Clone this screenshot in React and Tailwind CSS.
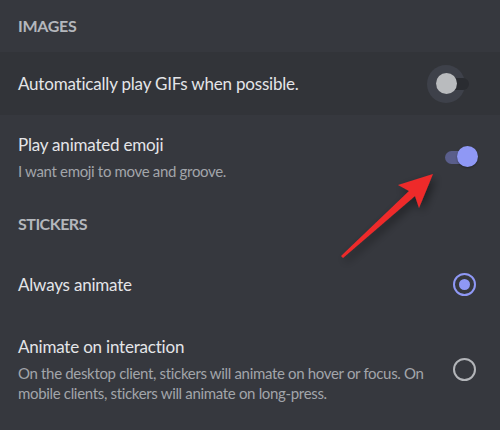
import React from "react";

function ToggleOff() {
  return (
    <div className="relative w-[42px] h-[42px] shrink-0">
      <div className="absolute left-0 top-[2px] w-[38px] h-[38px] rounded-full bg-[#3e414a]" />
      <div className="absolute left-[9px] top-[15px] w-[33px] h-[12px] rounded-full bg-[#2a2c31]" />
      <div className="absolute left-[8.5px] top-[10.5px] w-[21px] h-[21px] rounded-full bg-[#b9bbbe]" />
    </div>
  );
}

function ToggleOn() {
  return (
    <div className="relative w-[33px] h-[22px] shrink-0">
      <div className="absolute left-0 top-[4.5px] w-[26px] h-[13px] rounded-full bg-[#5a5e8b]" />
      <div className="absolute left-[12px] top-0 w-[21px] h-[21px] rounded-full bg-[#8f98f5] shadow-[0_1px_2px_rgba(0,0,0,0.35)]" />
    </div>
  );
}

function Radio({ checked }) {
  return checked ? (
    <div className="w-[23px] h-[23px] rounded-full border-[2.5px] border-[#8f98f5] flex items-center justify-center shrink-0">
      <div className="w-[11px] h-[11px] rounded-full bg-[#8f98f5]" />
    </div>
  ) : (
    <div className="w-[23px] h-[23px] rounded-full border-[2.5px] border-[#b3b5b9] shrink-0" />
  );
}

export default function App() {
  return (
    <div
      className="relative w-[500px] h-[430px] overflow-hidden bg-[#36383e] text-[#e4e5e8]"
      style={{ fontFamily: '"Lato", "Noto Sans", sans-serif' }}
    >
      <div className="h-[52px] flex items-center pl-[18px] text-[16px] font-bold text-[#b4b7bc] tracking-[-0.3px]">
        IMAGES
      </div>

      <div className="h-[63px] flex items-center justify-between pl-[18px] pr-[31px] bg-[#323439]">
        <span className="text-[17px] leading-[22px] tracking-[-0.2px]">Automatically play GIFs when possible.</span>
        <ToggleOff />
      </div>

      <div className="h-[84px] flex items-center justify-between pl-[18px] pr-[22px]">
        <div className="flex flex-col">
          <span className="text-[17px] leading-[22px] tracking-[-0.2px]">Play animated emoji</span>
          <span className="text-[15px] leading-[20px] mt-[5px] text-[#a2a5aa] tracking-[-0.33px]">I want emoji to move and groove.</span>
        </div>
        <ToggleOn />
      </div>

      <div className="h-[49px] flex items-center pl-[18px] text-[16px] font-bold text-[#b4b7bc] tracking-[-0.5px]">
        STICKERS
      </div>

      <div className="h-[73px] flex items-center justify-between pl-[18px] pr-[24px]">
        <span className="text-[17px] leading-[22px] tracking-[-0.2px]">Always animate</span>
        <Radio checked />
      </div>

      <div className="h-[97px] flex items-center justify-between pl-[18px] pr-[24px]">
        <div className="flex flex-col">
          <span className="text-[17px] leading-[22px] tracking-[-0.2px]">Animate on interaction</span>
          <span className="text-[15px] leading-[20px] mt-[5px] text-[#a2a5aa] tracking-[-0.33px]">
            On the desktop client, stickers will animate on hover or focus. On
            <br />
            mobile clients, stickers will animate on long-press.
          </span>
        </div>
        <Radio />
      </div>

      <svg
        className="absolute inset-0 pointer-events-none"
        width="500"
        height="430"
        viewBox="0 0 500 430"
      >
        <defs>
          <filter id="sh" x="-50%" y="-50%" width="200%" height="200%">
            <feDropShadow dx="3" dy="4" stdDeviation="5" floodColor="#000" floodOpacity="0.45" />
          </filter>
        </defs>
        <polygon
          points="341,256 409,191 398,185 433,174 419,208 415,196 343,258"
          fill="#ee2b2b"
          filter="url(#sh)"
        />
      </svg>
    </div>
  );
}
